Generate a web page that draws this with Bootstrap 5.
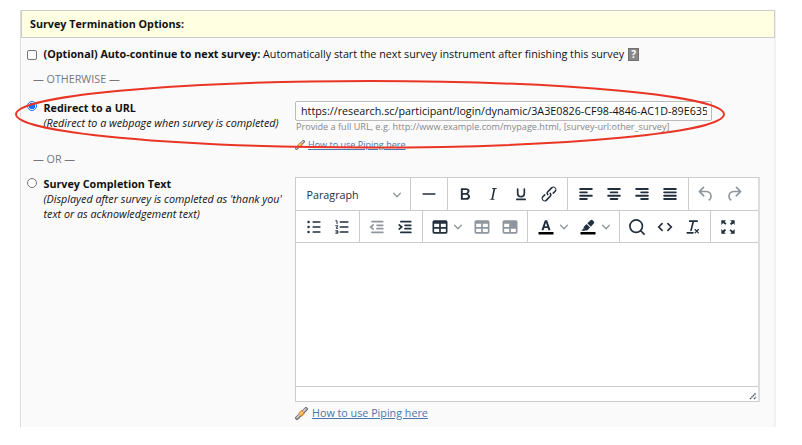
<!DOCTYPE html>
<html lang="en">
<head>
<meta charset="utf-8">
<title>Survey Termination Options</title>
<link href="https://cdn.jsdelivr.net/npm/bootstrap@5.3.0/dist/css/bootstrap.min.css" rel="stylesheet">
<style>
body{font:10.75px/15px "Open Sans",sans-serif;color:#111;background:#fff;overflow:hidden}
.page{padding:9px 26px 19px 20px;height:445px}
.panel{height:417px;background:#fafafa;border:1px solid #ddd;border-width:0 2px 0 1px;border-right-color:#f1f1f1}
.head{height:28px;margin:1px -1px 0 0;padding-left:8px;border:1px solid #ccc;background:#ffffe1}
.auto{height:33px;padding-left:6px}
.sep{height:18px;padding:1px 0 0 12px;color:#777}
.check{appearance:none;width:10px;height:10px;border:1px solid #767676;border-radius:2px;background:#fff;margin:0;flex:none}
.check.round{border-radius:50%}
.check.low{margin-top:1px}
.check.on{border-color:#1a6dff;background:radial-gradient(#1a6dff 0 2.9px,#fff 3.6px)}
.opt{width:274px;padding-left:6px;flex:none}
.txt{margin-left:6.5px;white-space:nowrap}
.help{width:11px;height:13px;background:#888;border:1px solid #707070;color:#fff;font-weight:700;font-size:10px;line-height:11px;text-align:center;margin-left:4px}
.redir{height:58px}
.url{width:417px;height:20px;border:1px solid #bbb;border-radius:2px;padding:0 4px 0 5px;background:#fff;color:#111;display:block}
.hint{font-size:9.12px;line-height:12px;color:#888;padding-left:1px}
.pipe{color:#4a77ab;text-decoration:underline}
.pipe.sm{font-size:9.05px;line-height:12px;margin-left:3px}
.small-row{padding-top:6px}
.second{padding-top:8px}
.editor{width:465px;height:225px;background:#fff;border:1px solid #ccc;border-right-width:2px;border-right-color:#ddd}
.bar{height:33px;border-bottom:1px solid #ccc}
.bar.two{height:32px;padding-left:1px}
.grp{padding:0 4px 0 3.5px;border-right:1px solid #ccc}
.two .grp{padding:0 3px}
.two .grp.tables{padding:0 3px 0 4px}
.two .grp.tints{padding:0 3px 0 5px}
.grp.last{border:0}
.tb{width:28px;height:100%}
.tb.wide{width:41px;padding-left:3px}
.tb.wide.tint{width:41.5px}
.tb svg.ic{width:20px;height:20px;fill:#222f3e;flex:none}
.dim svg.ic{opacity:.5}
svg.ch{width:8px;height:8px;fill:#222f3e;opacity:.5;flex:none}
.ln{stroke:#222f3e;stroke-width:2;stroke-linecap:round;fill:none}
.thick{stroke-width:2.3}
.thin{stroke-width:1.2}
.para{width:106.5px;padding:2px 5px 0 7px;color:#222f3e}
.foot{height:15px;border-top:1px solid #ccc}
.ring{position:absolute;left:0;top:0;width:802px;height:160px;pointer-events:none}
</style>
<script src="https://cdn.jsdelivr.net/npm/bootstrap@5.3.0/dist/js/bootstrap.bundle.min.js"></script>
</head>
<body>
<svg width="0" height="0" class="position-absolute">
<symbol id="chev" viewBox="0 0 10 10"><path d="M8.7 2.2c.3-.3.8-.3 1 0 .4.4.4.9 0 1.2L5.7 7.8c-.3.3-.9.3-1.2 0L.2 3.4a.8.8 0 0 1 0-1.2c.3-.3.8-.3 1.1 0L5 6l3.7-3.8z"/></symbol>
<symbol id="pipe" viewBox="0 0 13 13"><path d="M2 11 11 2" stroke="#666" stroke-width="3.8" stroke-linecap="round"/><path d="M2 10.7 10.7 2" stroke="#ccc" stroke-width="1.8" stroke-linecap="round"/><path d="M5 8 8.3 4.8" stroke="#e8862a" stroke-width="4.8"/><path d="M5 7.5 7.6 5" stroke="#ffd27a" stroke-width="1.8"/></symbol>
</svg>
<main class="page">
<section class="panel">
  <div class="head d-flex align-items-center fw-bold">Survey Termination Options:</div>
  <div class="auto d-flex align-items-center"><input type="checkbox" class="check"><span class="txt"><b>(Optional) Auto-continue to next survey:</b> Automatically start the next survey instrument after finishing this survey</span><span class="help">?</span></div>
  <div class="sep">— OTHERWISE —</div>
  <div class="redir d-flex mt-1">
    <div class="opt d-flex"><input type="radio" checked class="check round on mt-2"><div class="txt pt-2"><b>Redirect to a URL</b><br><i>(Redirect to a webpage when survey is completed)</i></div></div>
    <div class="pt-2"><input class="url" value="https://research.sc/participant/login/dynamic/3A3E0826-CF98-4846-AC1D-89E6359A">
      <div class="hint">Provide a full URL, e.g. http://www.example.com/mypage.html, [survey-url:other_survey]</div>
      <div class="small-row d-flex align-items-center"><svg width="10" height="10"><use href="#pipe"/></svg><a class="pipe sm">How to use Piping here</a></div>
    </div>
  </div>
  <div class="sep">— OR —</div>
  <div class="second d-flex">
    <div class="opt d-flex"><input type="radio" class="check round low"><div class="txt"><b>Survey Completion Text</b><br><i>(Displayed after survey is completed as 'thank you'<br>text or as acknowledgement text)</i></div></div>
    <div>
      <div class="editor d-flex flex-column">
        <div class="bar one d-flex">
          <div class="grp d-flex"><div class="para d-flex align-items-center justify-content-between">Paragraph <svg class="ch"><use href="#chev"/></svg></div></div>
          <div class="grp d-flex"><div class="tb d-flex align-items-center justify-content-center"><svg class="ic" viewBox="0 0 24 24"><path class="ln" d="M5 12h14"/></svg></div></div>
          <div class="grp d-flex">
            <div class="tb d-flex align-items-center justify-content-center"><svg class="ic" viewBox="0 0 24 24"><path d="M7.8 19c-.3 0-.5 0-.6-.2l-.2-.5V5.7c0-.2 0-.4.2-.5l.6-.2h5c1.5 0 2.7.3 3.5 1 .7.6 1.1 1.4 1.1 2.5a3 3 0 0 1-.6 1.9c-.4.6-1 1-1.6 1.2.4.1.9.3 1.3.6s.8.7 1 1.2c.4.4.5 1 .5 1.6 0 1.3-.4 2.3-1.3 3-.8.7-2.1 1-3.8 1H7.8zm5-8.3c.6 0 1.2-.1 1.6-.5.4-.3.6-.7.6-1.3 0-1.1-.8-1.7-2.3-1.7H9.3v3.5h3.4zm.5 6c.7 0 1.3-.1 1.7-.4.4-.4.6-.9.6-1.5s-.2-1-.7-1.4c-.4-.3-1-.4-2-.4H9.4v3.8h4z"/></svg></div>
            <div class="tb d-flex align-items-center justify-content-center"><svg class="ic" viewBox="0 0 24 24"><path d="M16.7 4.7l-.1.9h-.3c-.6 0-1 0-1.4.3-.3.3-.4.6-.5 1.1l-2.1 9.8v.6c0 .5.4.8 1.4.8h.2l-.2.8H8l.2-.8h.2c1.1 0 1.8-.5 2-1.5l2-9.8.1-.5c0-.6-.4-.8-1.4-.8h-.3l.2-.9h5.8z"/></svg></div>
            <div class="tb d-flex align-items-center justify-content-center"><svg class="ic" viewBox="0 0 24 24"><path class="ln" d="M8 6v5.5a4 3.8 0 0 0 8 0V6M7 18.5h10"/></svg></div>
            <div class="tb d-flex align-items-center justify-content-center"><svg class="ic" viewBox="0 0 24 24"><path d="M6.2 12.3a1 1 0 0 1 1.4 1.4l-2.1 2a2 2 0 1 0 2.7 2.8l4.8-4.8a1 1 0 0 0 0-1.4 1 1 0 1 1 1.4-1.3 2.9 2.9 0 0 1 0 4L9.6 20a3.9 3.9 0 0 1-5.5-5.5l2-2zm11.6-.6a1 1 0 0 1-1.4-1.4l2-2a2 2 0 1 0-2.6-2.8L11 10.3a1 1 0 0 0 0 1.4A1 1 0 1 1 9.6 13a2.9 2.9 0 0 1 0-4L14.4 4a3.9 3.9 0 0 1 5.5 5.5l-2 2z"/></svg></div>
          </div>
          <div class="grp d-flex">
            <div class="tb d-flex align-items-center justify-content-center"><svg class="ic" viewBox="0 0 24 24"><path class="ln thick" d="M5 6h14M5 10h8M5 14h14M5 18h8"/></svg></div>
            <div class="tb d-flex align-items-center justify-content-center"><svg class="ic" viewBox="0 0 24 24"><path class="ln thick" d="M5 6h14M8 10h8M5 14h14M8 18h8"/></svg></div>
            <div class="tb d-flex align-items-center justify-content-center"><svg class="ic" viewBox="0 0 24 24"><path class="ln thick" d="M5 6h14M11 10h8M5 14h14M11 18h8"/></svg></div>
            <div class="tb d-flex align-items-center justify-content-center"><svg class="ic" viewBox="0 0 24 24"><path class="ln thick" d="M5 6h14M5 10h14M5 14h14M5 18h14"/></svg></div>
          </div>
          <div class="grp last d-flex dim">
            <div class="tb d-flex align-items-center justify-content-center"><svg class="ic" viewBox="0 0 24 24"><path d="M6.4 8H12c3.7 0 6.2 2 6.8 5.1.6 2.7-.4 5.6-2.3 6.8a1 1 0 0 1-1-1.8c1.1-.6 1.8-2.7 1.4-4.6-.5-2.1-2.1-3.5-4.9-3.5H6.4l3.3 3.3a1 1 0 1 1-1.4 1.4l-5-5a1 1 0 0 1 0-1.4l5-5a1 1 0 0 1 1.4 1.4L6.4 8z"/></svg></div>
            <div class="tb d-flex align-items-center justify-content-center"><svg class="ic" viewBox="0 0 24 24"><path transform="matrix(-1 0 0 1 24 0)" d="M6.4 8H12c3.7 0 6.2 2 6.8 5.1.6 2.7-.4 5.6-2.3 6.8a1 1 0 0 1-1-1.8c1.1-.6 1.8-2.7 1.4-4.6-.5-2.1-2.1-3.5-4.9-3.5H6.4l3.3 3.3a1 1 0 1 1-1.4 1.4l-5-5a1 1 0 0 1 0-1.4l5-5a1 1 0 0 1 1.4 1.4L6.4 8z"/></svg></div>
          </div>
        </div>
        <div class="bar two d-flex">
          <div class="grp d-flex">
            <div class="tb d-flex align-items-center justify-content-center"><svg class="ic" viewBox="0 0 24 24"><path class="ln" d="M11 6h8M11 12h8M11 18h8"/><circle cx="5.5" cy="6" r="1.5"/><circle cx="5.5" cy="12" r="1.5"/><circle cx="5.5" cy="18" r="1.5"/></svg></div>
            <div class="tb d-flex align-items-center justify-content-center"><svg class="ic" viewBox="0 0 24 24"><path class="ln" d="M10 6h9M10 12h9M10 18h9"/><path class="ln thin" d="M4.5 4.5H6V8M4.5 10.5H7l-2 3h2M4.5 16.5H7v3H4.5M5 18h2"/></svg></div>
          </div>
          <div class="grp d-flex">
            <div class="tb dim d-flex align-items-center justify-content-center"><svg class="ic" viewBox="0 0 24 24"><path class="ln" d="M6 5.5h13M12 10h7M12 14h7M6 18.5h13M7.5 9.5 4.5 12l3 2.5"/></svg></div>
            <div class="tb d-flex align-items-center justify-content-center"><svg class="ic" viewBox="0 0 24 24"><path class="ln" d="M7 5.5h12M12 10h7M12 14h7M7 18.5h12M5 9.5 8 12l-3 2.5"/></svg></div>
          </div>
          <div class="grp tables d-flex">
            <div class="tb wide d-flex align-items-center"><svg class="ic" viewBox="0 0 24 24"><path fill-rule="evenodd" d="M19 4a2 2 0 0 1 2 2v12a2 2 0 0 1-2 2H5a2 2 0 0 1-2-2V6c0-1.1.9-2 2-2h14zM5 14v4h6v-4H5zm14 0h-6v4h6v-4zm0-6h-6v4h6V8zM5 12h6V8H5v4z"/></svg><svg class="ch ms-1"><use href="#chev"/></svg></div>
            <div class="tb dim d-flex align-items-center justify-content-center"><svg class="ic" viewBox="0 0 24 24"><path fill-rule="evenodd" d="M19 4a2 2 0 0 1 2 2v12a2 2 0 0 1-2 2H5a2 2 0 0 1-2-2V6c0-1.1.9-2 2-2h14zM5 14v4h6v-4H5zm14 0h-6v4h6v-4zm0-6h-6v4h6V8zM5 12h6V8H5v4z"/></svg></div>
            <div class="tb dim d-flex align-items-center justify-content-center"><svg class="ic" viewBox="0 0 24 24"><path fill-rule="evenodd" d="M19 4a2 2 0 0 1 2 2v12a2 2 0 0 1-2 2H5a2 2 0 0 1-2-2V6c0-1.1.9-2 2-2h14zM5 14v4h6v-4H5zm14 0h-6v4h6v-4zM5 12h6V8H5v4z"/></svg></div>
          </div>
          <div class="grp tints d-flex">
            <div class="tb wide tint d-flex align-items-center"><svg class="ic" viewBox="0 0 24 24"><path d="M3 18h18v3H3z" fill="#000"/><path fill-rule="evenodd" d="M8.7 16H7.2a.5.5 0 0 1-.5-.7L10.4 4.5a.8.8 0 0 1 .7-.5h1.8c.3 0 .6.2.7.5l3.7 10.8a.5.5 0 0 1-.5.7h-1.5a.5.5 0 0 1-.5-.4l-.8-2.5h-4l-.8 2.5a.5.5 0 0 1-.5.4zm1.9-4.9h2.8L12 6.9z"/></svg><svg class="ch ms-1"><use href="#chev"/></svg></div>
            <div class="tb wide tint d-flex align-items-center"><svg class="ic" viewBox="0 0 24 24"><path d="M3 18h18v3H3z" fill="#000"/><path d="M8.2 16.5H4l2.7-3 3 2.2zM7 11.8l3.3-3.3 4.2 4.2-3.3 3.2c-.5.5-1 .5-1.5 0L7 13.2c-.4-.4-.4-1 0-1.4zM11.2 7.6 15 4a2 2 0 0 1 2.6 0L19 5.4c.6.7.6 1.8 0 2.5l-3.7 3.9z"/></svg><svg class="ch ms-1"><use href="#chev"/></svg></div>
          </div>
          <div class="grp d-flex">
            <div class="tb d-flex align-items-center justify-content-center"><svg class="ic" viewBox="0 0 24 24"><circle class="ln" cx="11" cy="11" r="7.5"/><path class="ln" d="m16.5 16.5 4 4"/></svg></div>
            <div class="tb d-flex align-items-center justify-content-center"><svg class="ic" viewBox="0 0 24 24"><path class="ln" d="M8.5 8l-4 4 4 4M15.5 8l4 4-4 4"/></svg></div>
            <div class="tb d-flex align-items-center justify-content-center"><svg class="ic" viewBox="0 0 24 24"><path d="M13.2 6a1 1 0 0 1 0 .2l-2.6 10a1 1 0 0 1-1 .8h-.2a.8.8 0 0 1-.8-1l2.6-10H8a1 1 0 1 1 0-2h9a1 1 0 0 1 0 2h-3.8zM5 18h7a1 1 0 0 1 0 2H5a1 1 0 0 1 0-2zm13 1.5L16.5 18 15 19.5a.7.7 0 0 1-1-1l1.5-1.5-1.5-1.5a.7.7 0 0 1 1-1l1.5 1.5 1.5-1.5a.7.7 0 0 1 1 1L17.5 17l1.5 1.5a.7.7 0 0 1-1 1z"/></svg></div>
          </div>
          <div class="grp last d-flex"><div class="tb d-flex align-items-center justify-content-center"><svg class="ic" viewBox="0 0 24 24"><path d="M4 4h5.5L7.9 5.6l2.3 2.3-1.5 1.5-2.5-2.2L4 9.5zM20 4v5.5l-1.6-1.6-2.6 1.8-1.5-1.5 2.2-2.6L14.5 4zM4 20v-5.5l1.6 1.6 2.6-1.8 1.5 1.5-2.2 2.6L9.5 20zM20 20h-5.5l1.6-1.6-2.3-2.3 1.5-1.5 2.5 2.2L20 14.5z"/></svg></div></div>
        </div>
        <div class="flex-grow-1"></div>
        <div class="foot d-flex justify-content-end align-items-end"><svg width="9" height="10" viewBox="0 0 9 10"><path d="M1 8 7 2M5 8l2-2" stroke="#444b57" stroke-width="1.4" stroke-dasharray="1.5 .6"/></svg></div>
      </div>
      <div class="d-flex align-items-center pt-1"><svg width="13" height="13"><use href="#pipe"/></svg><a class="pipe ms-1">How to use Piping here</a></div>
    </div>
  </div>
</section>
</main>
<svg class="ring" viewBox="0 0 802 160"><ellipse cx="370" cy="114.3" rx="354" ry="33.2" fill="none" stroke="#e93526" stroke-width="2"/></svg>
</body>
</html>
